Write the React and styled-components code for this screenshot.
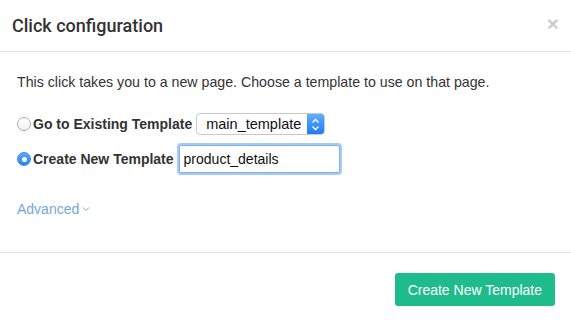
import styled, { createGlobalStyle } from "styled-components";

const GlobalStyle = createGlobalStyle`
  html, body {
    margin: 0;
    padding: 0;
    background: #fff;
  }
  body {
    font-family: "Liberation Sans", Arial, sans-serif;
    color: #333;
  }
`;

const Modal = styled.div`
  width: 571px;
  height: 323px;
  display: flex;
  flex-direction: column;
  background: #fff;
`;

const Header = styled.div`
  display: flex;
  align-items: center;
  justify-content: space-between;
  height: 51px;
  padding: 0 12px;
  border-bottom: 1px solid #e5e5e5;
`;

const Title = styled.h4`
  margin: 0;
  font-family: Roboto, "Liberation Sans", sans-serif;
  font-size: 18px;
  font-weight: 500;
  color: #333;
  line-height: 21px;
`;

const Close = styled.button`
  border: 0;
  background: none;
  padding: 0;
  margin-top: -4px;
  font-family: "Liberation Sans", Arial, sans-serif;
  font-size: 21px;
  font-weight: bold;
  line-height: 1;
  color: #000;
  opacity: 0.2;
  cursor: pointer;
`;

const Body = styled.div`
  padding: 20px 17px 0;
  height: 201px;
  box-sizing: border-box;
  border-bottom: 1px solid #e5e5e5;
`;

const Intro = styled.p`
  margin: 0 0 21px;
  font-size: 14.2px;
  line-height: 20px;
`;

const Row = styled.div`
  display: flex;
  align-items: center;
  height: ${({ $h }) => $h}px;
  margin-bottom: ${({ $mb }) => $mb}px;
`;

const Radio = styled.span`
  box-sizing: border-box;
  width: 14px;
  height: 14px;
  border-radius: 50%;
  margin-right: 2px;
  display: inline-flex;
  align-items: center;
  justify-content: center;
  background: ${({ $on }) => ($on ? "linear-gradient(#5aa6fb, #2a84f5)" : "linear-gradient(#fff, #f3f3f3)")};
  border: 1px solid ${({ $on }) => ($on ? "#3a8af0" : "#a9a9a9")};

  &::after {
    content: "";
    display: ${({ $on }) => ($on ? "block" : "none")};
    width: 5px;
    height: 5px;
    border-radius: 50%;
    background: #fff;
  }
`;

const Label = styled.span`
  font-size: 14px;
  font-weight: bold;
  margin-right: ${({ $gap }) => $gap}px;
`;

const Select = styled.div`
  box-sizing: border-box;
  display: flex;
  align-items: stretch;
  width: 129px;
  height: 22px;
  border: 1px solid #c9c9c9;
  border-radius: 4px;
  background: #fff;
  overflow: hidden;
`;

const SelectValue = styled.span`
  flex: 1;
  padding-left: 9px;
  font-size: 14.5px;
  line-height: 20px;
  color: #111;
`;

const Stepper = styled.span`
  width: 17px;
  display: flex;
  align-items: center;
  justify-content: center;
  background: linear-gradient(#62adfc, #1f7cf6);
`;

const TextInput = styled.div`
  box-sizing: border-box;
  width: 161px;
  height: 28px;
  padding: 0 4px;
  border: 1px solid #7eaef0;
  box-shadow: 0 0 0 2px #a9c9f6;
  border-radius: 2px;
  font-size: 14px;
  line-height: 26px;
  color: #111;
`;

const Advanced = styled.a`
  display: inline-flex;
  align-items: center;
  gap: 3px;
  margin-top: 26px;
  font-size: 14px;
  line-height: 20px;
  color: #72a8dd;
  text-decoration: none;
`;

const Footer = styled.div`
  display: flex;
  justify-content: flex-end;
  padding: 20px 16px 0;
`;

const Button = styled.button`
  height: 33px;
  padding: 0 13px;
  border: 0;
  border-radius: 3px;
  background: #1fbc8b;
  color: #fff;
  font-family: "Liberation Sans", Arial, sans-serif;
  font-size: 14px;
  cursor: pointer;
`;

const App = () => {
  return (
    <Modal>
      <GlobalStyle />
      <Header>
        <Title>Click configuration</Title>
        <Close>×</Close>
      </Header>
      <Body>
        <Intro>
          This click takes you to a new page. Choose a template to use on that page.
        </Intro>
        <Row $h={22} $mb={10}>
          <Radio />
          <Label $gap={4}>Go to Existing Template</Label>
          <Select>
            <SelectValue>main_template</SelectValue>
            <Stepper>
              <svg width="9" height="13" viewBox="0 0 9 13" fill="none" stroke="#fff" strokeWidth="1.4">
                <path d="M1.5 4.5 4.5 1.5 7.5 4.5" />
                <path d="M1.5 8.5 4.5 11.5 7.5 8.5" />
              </svg>
            </Stepper>
          </Select>
        </Row>
        <Row $h={28} $mb={0}>
          <Radio $on />
          <Label $gap={5}>Create New Template</Label>
          <TextInput>product_details</TextInput>
        </Row>
        <Advanced href="#">
          Advanced
          <svg width="8" height="6" viewBox="0 0 8 6" fill="none" stroke="#72a8dd" strokeWidth="1">
            <path d="M1 1.5 4 4.5 7 1.5" />
          </svg>
        </Advanced>
      </Body>
      <Footer>
        <Button>Create New Template</Button>
      </Footer>
    </Modal>
  );
};

export default App;
